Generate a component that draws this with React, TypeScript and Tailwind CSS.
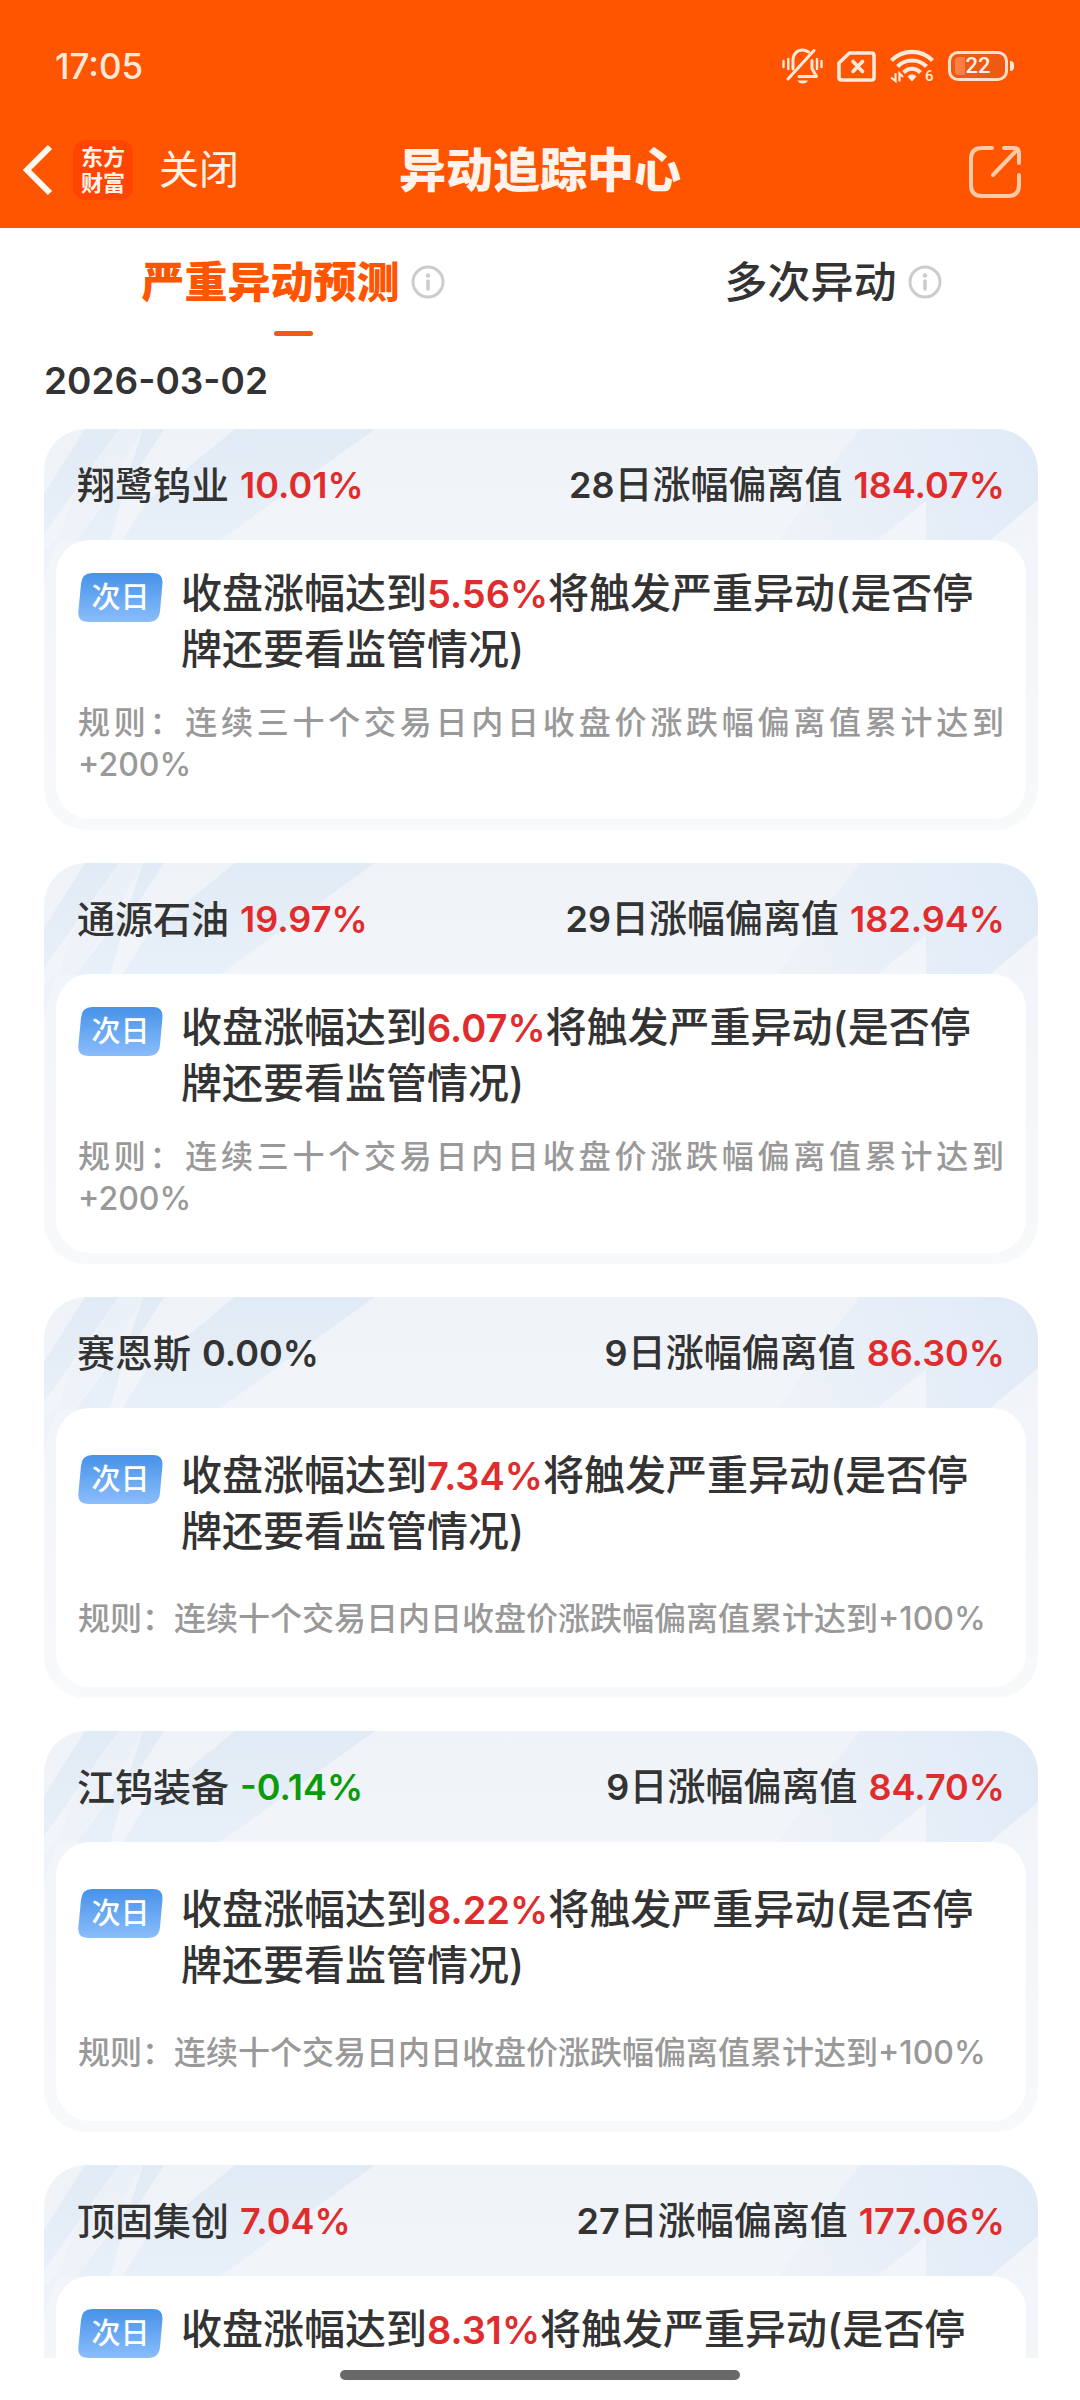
import React from "react";

type Tone = "up" | "down" | "flat";

interface Stock {
  name: string;
  change: string;
  tone: Tone;
  days: number;
  deviation: string;
  trigger: string;
  rule: string;
}

const RULE_30 = "规则：连续三十个交易日内日收盘价涨跌幅偏离值累计达到+200%";
const RULE_10 = "规则：连续十个交易日内日收盘价涨跌幅偏离值累计达到+100%";

const STOCKS: Stock[] = [
  { name: "翔鹭钨业", change: "10.01%", tone: "up", days: 28, deviation: "184.07%", trigger: "5.56%", rule: RULE_30 },
  { name: "通源石油", change: "19.97%", tone: "up", days: 29, deviation: "182.94%", trigger: "6.07%", rule: RULE_30 },
  { name: "赛恩斯", change: "0.00%", tone: "flat", days: 9, deviation: "86.30%", trigger: "7.34%", rule: RULE_10 },
  { name: "江钨装备", change: "-0.14%", tone: "down", days: 9, deviation: "84.70%", trigger: "8.22%", rule: RULE_10 },
  { name: "顶固集创", change: "7.04%", tone: "up", days: 27, deviation: "177.06%", trigger: "8.31%", rule: RULE_30 },
];

const TONE_CLASS: Record<Tone, string> = {
  up: "text-[#e02c2c]",
  down: "text-[#0a9b0a]",
  flat: "text-[#333333]",
};

function MutedBellIcon() {
  return (
    <svg className="h-9 w-[41px]" viewBox="0 0 41 36" fill="none" stroke="#ffe9db" strokeWidth="3" strokeLinecap="round" aria-hidden="true">
      <path d="M11 21V12.500C11 5.500 15.500 2 20.500 2C23 2 25 3 26.500 4" />
      <path d="M30 12.500V20.500L34.500 28.500H17" strokeLinejoin="round" />
      <path d="M32 2.500L6 31" />
      <path d="M15.500 32.500H26Q24.500 35.500 20.500 35.500Q17 35.500 15.500 32.500Z" fill="#ffe9db" stroke="none" />
      <path d="M1.500 13V19M6.300 11V21M35 11V21M39.500 13V19" strokeWidth="2.400" />
    </svg>
  );
}

function NoSimIcon() {
  return (
    <svg className="h-[31px] w-[39px]" viewBox="0 0 39 31" fill="none" stroke="#ffe9db" strokeWidth="3.600" strokeLinejoin="round" strokeLinecap="round" aria-hidden="true">
      <path d="M12.500 2H34.500Q37 2 37 4.500V26.500Q37 29 34.500 29H4.500Q2 29 2 26.500V12Z" />
      <path d="M16 10.500L25.500 20.500M25.500 10.500L16 20.500" />
    </svg>
  );
}

function WifiIcon() {
  return (
    <svg className="h-9 w-11" viewBox="0 -1 44 36" fill="none" stroke="#ffe9db" strokeWidth="4.200" aria-hidden="true">
      <path d="M1.500 11.500C13 0 31 0 42.500 11.500" />
      <path d="M7.500 17.500C15.500 9.500 28.500 9.500 36.500 17.500" />
      <path d="M13.500 23.500C18.500 18.500 25.500 18.500 30.500 23.500" />
      <path d="M17.500 27.500Q22 23 26.500 27.500L22 32.500Z" fill="#ffe9db" stroke="none" />
      <path d="M5.500 24V32L1 28.500M9.500 32.500V24.500L13 28" strokeWidth="2.200" />
      <text x="35" y="32" fill="#ffe9db" stroke="none" className="font-['Roboto'] text-[15px] font-medium">6</text>
    </svg>
  );
}

function Battery() {
  return (
    <div className="flex items-center gap-[2px]" role="img" aria-label="电量 22%">
      <div className="relative flex h-[30px] w-[60px] items-center justify-center rounded-[10px] border-3 border-[#ffe0cc] bg-[#ee5a12]">
        <span className="absolute top-[3px] bottom-[3px] left-[4px] w-[10px] rounded-l-[4px] bg-[#ff7f43]" />
        <span className="relative font-['Roboto'] text-[22px] leading-none font-medium text-[#fff0e6]">22</span>
      </div>
      <span className="h-[10px] w-[4px] rounded-r-full bg-[#ffe9db]" />
    </div>
  );
}

function StatusBar() {
  return (
    <div className="flex items-center justify-between pt-12 pr-[66px] pl-[55px]">
      <time className="font-['Inter'] text-[35px] leading-9 font-medium text-[#ffe9db]">17:05</time>
      <div className="flex items-center gap-[14px]">
        <MutedBellIcon />
        <NoSimIcon />
        <WifiIcon />
        <Battery />
      </div>
    </div>
  );
}

function NavBar() {
  return (
    <div className="grid grid-cols-[1fr_auto_1fr] items-center px-[22px] pt-[56px] pb-7">
      <div className="flex items-center">
        <button type="button" aria-label="返回">
          <svg className="h-[52px] w-8" viewBox="0 0 32 52" fill="none" stroke="#fff8f2" strokeWidth="6" aria-hidden="true">
            <path d="M28 3L5 26L28 49" strokeLinejoin="miter" />
          </svg>
        </button>
        <div className="ml-[19px] flex h-[60px] w-[60px] flex-col items-center justify-center rounded-[13px] bg-[#ff4500] text-[22px] leading-[26px] font-bold text-[#fff3ec]">
          <span>东方</span>
          <span>财富</span>
        </div>
        <button type="button" className="ml-[26px] text-[40px] leading-[60px] text-[#fff3ec]">关闭</button>
      </div>
      <h1 className="text-[47px] leading-[60px] font-black text-[#fff3ec]">异动追踪中心</h1>
      <button type="button" aria-label="分享" className="mt-1 mr-9 justify-self-end">
        <svg className="h-[54px] w-[54px]" viewBox="0 0 54 54" fill="none" stroke="#ffcaa8" strokeWidth="4" strokeLinecap="round" strokeLinejoin="round" aria-hidden="true">
          <path d="M24 3H14Q3 3 3 14V40Q3 51 14 51H40Q51 51 51 40V30" />
          <path d="M36 3H46Q51 3 51 8V18M49 5L25 30" />
        </svg>
      </button>
    </div>
  );
}

function InfoIcon() {
  return (
    <svg className="h-[34px] w-[34px]" viewBox="0 0 34 34" fill="none" aria-hidden="true">
      <circle cx="17" cy="17" r="15" stroke="#cccccc" strokeWidth="3" />
      <circle cx="17" cy="10.500" r="2.200" fill="#cccccc" />
      <path d="M17 16V24" stroke="#cccccc" strokeWidth="3.600" strokeLinecap="round" />
    </svg>
  );
}

function Tab({ label, active = false }: { label: string; active?: boolean }) {
  return (
    <div className="flex flex-col items-center pl-[46px]">
      <div className="flex items-center gap-[11px]">
        <button
          type="button"
          role="tab"
          aria-selected={active}
          className={
            active
              ? "text-[43px] leading-[60px] font-black text-[#ff5500]"
              : "text-[43px] leading-[60px] font-medium text-[#333333]"
          }
        >
          {label}
        </button>
        <button type="button" aria-label={label + "说明"}>
          <InfoIcon />
        </button>
      </div>
      {active && <span className="mt-[19px] h-[5px] w-[39px] rounded-full bg-[#f05a12]" />}
    </div>
  );
}

function CardStreaks() {
  return (
    <>
      <svg className="absolute top-0 left-0 h-[150px] w-[340px]" viewBox="0 0 340 150" fill="url(#streakLeft)" aria-hidden="true">
        <defs>
          <linearGradient id="streakLeft" x1="0" y1="0" x2="0" y2="120" gradientUnits="userSpaceOnUse">
            <stop offset="0" stopColor="#e1ebf5" />
            <stop offset="1" stopColor="#e9f0f9" />
          </linearGradient>
        </defs>
        <path d="M41 0H75L0 105V65Z" />
        <path d="M75 0H99L59 71L32 112H10L0 122V150L28 71Z" opacity="0.350" />
        <path d="M99 0H120L80 62L66 112H32L86 40Z" />
        <path d="M191 0H331L175 112H78L104 71Z" />
      </svg>
      <svg className="absolute top-0 right-0 h-[150px] w-[260px]" viewBox="0 0 260 150" aria-hidden="true">
        <defs>
          <linearGradient id="streakRight" x1="0" y1="110" x2="240" y2="0" gradientUnits="userSpaceOnUse">
            <stop offset="0" stopColor="#eff3f8" />
            <stop offset="0.500" stopColor="#e7eef8" />
            <stop offset="1" stopColor="#e0ebf7" />
          </linearGradient>
        </defs>
        <path d="M82 0H260V71L211 112H148V72L98 112H0L55 34Z" fill="url(#streakRight)" />
      </svg>
    </>
  );
}

function NextDayBadge() {
  return (
    <div className="relative mt-[7px] flex h-[49px] w-[85px] shrink-0 items-center justify-center">
      <svg className="absolute inset-0 h-full w-full" viewBox="0 0 85 49" aria-hidden="true">
        <defs>
          <linearGradient id="badge" x1="0" y1="0" x2="0" y2="1">
            <stop offset="0" stopColor="#4792e9" />
            <stop offset="1" stopColor="#8abdfb" />
          </linearGradient>
        </defs>
        <path d="M14 0H75Q85 0 84.500 10L82 38Q81 49 70 49H10Q-0.500 49 0.300 39L3 11Q4 0 14 0Z" fill="url(#badge)" />
      </svg>
      <span className="relative text-[29px] leading-none font-medium text-white">次日</span>
    </div>
  );
}

function StockCard({ stock }: { stock: Stock }) {
  return (
    <article className="relative shrink-0 overflow-hidden rounded-[42px] bg-linear-to-b from-[#eff3f8] to-[#f8f9fb] px-3 pb-[11px]">
      <CardStreaks />
      <header className="relative flex h-[111px] items-center justify-between px-[21px] text-[38px] leading-[56px] font-medium">
        <h2 className="flex items-center gap-[11px] font-medium">
          {stock.name}
          <span className={`font-['Inter'] text-[36px] font-semibold ${TONE_CLASS[stock.tone]}`}>{stock.change}</span>
        </h2>
        <p className="flex items-center gap-[11px]">
          <span><span className="font-['Inter'] text-[36px] font-semibold">{stock.days}</span>日涨幅偏离值</span>
          <span className="font-['Inter'] text-[36px] font-semibold text-[#e02c2c]">{stock.deviation}</span>
        </p>
      </header>
      <div className="relative flex min-h-[279px] flex-col justify-evenly rounded-[34px] bg-white px-[22px] pb-[7px]">
        <div className="flex items-start gap-[18px]">
          <NextDayBadge />
          <p className="text-[41px] leading-[55px] font-medium">
            收盘涨幅达到<span className="font-['Inter'] text-[38px] font-semibold text-[#e02c2c]">{stock.trigger}</span>将触发严重异动(是否停牌还要看监管情况)
          </p>
        </div>
        <p className="text-justify text-[32px] leading-[42px] font-medium text-[#999999]">{stock.rule}</p>
      </div>
    </article>
  );
}

export default function App() {
  return (
    <div lang="zh-CN" className="flex h-screen flex-col overflow-hidden bg-white font-['Inter','Noto_Sans_CJK_SC',sans-serif] text-[#333333]">
      <header className="shrink-0 bg-[#ff5500]">
        <StatusBar />
        <NavBar />
      </header>
      <div role="tablist" className="grid h-[129px] shrink-0 grid-cols-2 items-start pt-[24px]">
        <Tab label="严重异动预测" active />
        <Tab label="多次异动" />
      </div>
      <main className="flex min-h-0 flex-1 flex-col gap-[33px] overflow-y-auto pr-[42px] pl-[44px] [scrollbar-width:none]">
        <time className="-mb-[9px] shrink-0 text-[37px] leading-[48px] font-semibold">2026-03-02</time>
        {STOCKS.map((stock) => (
          <StockCard key={stock.name} stock={stock} />
        ))}
      </main>
      <footer className="flex h-[42px] shrink-0 items-start justify-center pt-3">
        <span className="h-[10px] w-[37%] rounded-full bg-[#696969]" />
      </footer>
    </div>
  );
}
